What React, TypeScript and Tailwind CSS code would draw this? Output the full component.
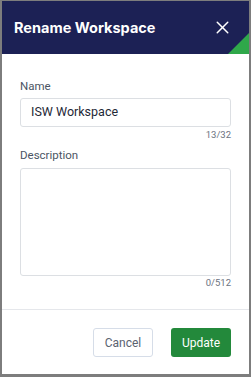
import { X } from 'lucide-react';

export default function App() {
  return (
    <div className="w-[251px] h-[377px] bg-[#7d7d7d] pl-[2px] pt-[1px] pr-[2px] pb-[3px]" style={{ fontFamily: 'Roboto, "Liberation Sans", sans-serif' }}>
      <div className="flex h-full flex-col bg-white">
        {/* header */}
        <div className="relative flex h-[53px] shrink-0 items-center justify-between overflow-hidden bg-[#1c2155] pl-[12px] pr-[16px]">
          <h1 className="text-[14.5px] font-bold text-white" style={{ fontFamily: 'Inter, "Liberation Sans", sans-serif' }}>
            Rename Workspace
          </h1>
          <X className="h-[21px] w-[21px] text-white" strokeWidth={1.7} />
          <div className="absolute bottom-0 right-0 h-0 w-0 border-b-[21px] border-l-[21px] border-b-[#2fa84a] border-l-transparent" />
        </div>

        {/* body */}
        <div className="flex flex-col px-[18px] pt-[25px]">
          <label className="text-[11.5px] leading-[15px] text-[#4b5563]">Name</label>
          <div className="mt-[4px] flex h-[29px] items-center rounded-[3px] border border-[#dcdfe3] px-[10px] text-[12.5px] text-[#1f2937]">
            ISW Workspace
          </div>
          <div className="mt-[2px] text-right text-[9.5px] leading-[12px] text-[#6b7280]">13/32</div>

          <label className="mt-[7px] text-[11.5px] leading-[15px] text-[#4b5563]">Description</label>
          <div className="mt-[5px] h-[108px] rounded-[3px] border border-[#dcdfe3]" />
          <div className="mt-[1px] text-right text-[9.5px] leading-[12px] text-[#6b7280]">0/512</div>
        </div>

        <div className="mt-[20px] h-px bg-[#e5e7eb]" />

        {/* footer */}
        <div className="flex justify-end gap-[18px] px-[18px] pt-[18px]">
          <button className="h-[29px] w-[60px] rounded-[3px] border border-[#d6dde8] bg-white text-[12px] text-[#5b6370]">
            Cancel
          </button>
          <button className="h-[29px] w-[60px] rounded-[3px] bg-[#23893b] text-[12px] text-white">
            Update
          </button>
        </div>
      </div>
    </div>
  );
}
